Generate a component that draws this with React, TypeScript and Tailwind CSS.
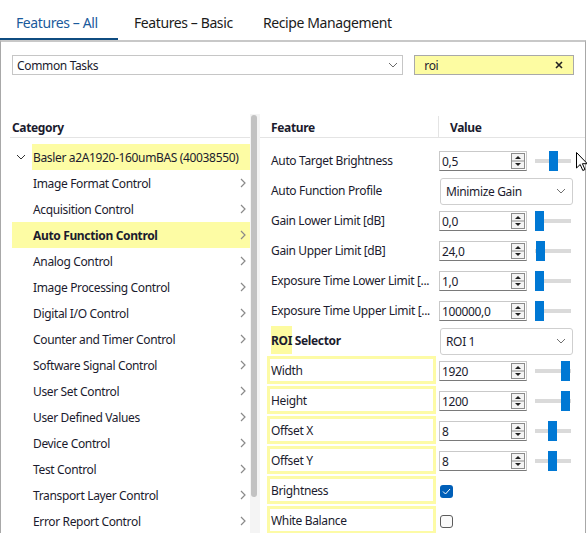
import React from "react";

const categories = [
  "Image Format Control",
  "Acquisition Control",
  "Auto Function Control",
  "Analog Control",
  "Image Processing Control",
  "Digital I/O Control",
  "Counter and Timer Control",
  "Software Signal Control",
  "User Set Control",
  "User Defined Values",
  "Device Control",
  "Test Control",
  "Transport Layer Control",
  "Error Report Control",
];

type Row =
  | { label: string; kind: "spin"; value: string; thumb: number; boxed?: boolean }
  | { label: string; kind: "select"; value: string; roi?: boolean }
  | { label: string; kind: "check"; checked: boolean; boxed?: boolean };

const rows: Row[] = [
  { label: "Auto Target Brightness", kind: "spin", value: "0,5", thumb: 14 },
  { label: "Auto Function Profile", kind: "select", value: "Minimize Gain" },
  { label: "Gain Lower Limit [dB]", kind: "spin", value: "0,0", thumb: 0 },
  { label: "Gain Upper Limit [dB]", kind: "spin", value: "24,0", thumb: 1 },
  { label: "Exposure Time Lower Limit [...", kind: "spin", value: "1,0", thumb: 0 },
  { label: "Exposure Time Upper Limit [...", kind: "spin", value: "100000,0", thumb: 0 },
  { label: "ROI Selector", kind: "select", value: "ROI 1", roi: true },
  { label: "Width", kind: "spin", value: "1920", thumb: 26, boxed: true },
  { label: "Height", kind: "spin", value: "1200", thumb: 26, boxed: true },
  { label: "Offset X", kind: "spin", value: "8", thumb: 13, boxed: true },
  { label: "Offset Y", kind: "spin", value: "8", thumb: 13, boxed: true },
  { label: "Brightness", kind: "check", checked: true, boxed: true },
  { label: "White Balance", kind: "check", checked: false, boxed: true },
];

function ChevronDown({ className = "" }: { className?: string }) {
  return (
    <svg width="10" height="6" viewBox="0 0 10 6" className={className}>
      <path d="M1 1 L5 5 L9 1" fill="none" stroke="currentColor" strokeWidth="1" />
    </svg>
  );
}

function ChevronRight() {
  return (
    <svg width="6" height="10" viewBox="0 0 6 10" className="text-[#8a8a8a]">
      <path d="M1 1 L5 5 L1 9" fill="none" stroke="currentColor" strokeWidth="1.2" />
    </svg>
  );
}

function SpinButtons() {
  return (
    <svg width="14" height="16" viewBox="0 0 14 16" className="shrink-0">
      <rect x="0.5" y="0.5" width="13" height="15" fill="#f4f4f4" stroke="#8c8c8c" />
      <line x1="1" y1="8" x2="13" y2="8" stroke="#8c8c8c" />
      <path d="M4 6 L7 3 L10 6 Z" fill="#222" />
      <path d="M4 10 L7 13 L10 10 Z" fill="#222" />
    </svg>
  );
}

function Slider({ thumb }: { thumb: number }) {
  return (
    <div className="relative ml-[8px] h-[20px] w-[36px]">
      <div className="absolute left-0 right-0 top-[8px] h-[4px] bg-[#dadada]" />
      <div className="absolute top-0 h-[20px] w-[9px] bg-[#0078d4]" style={{ left: thumb }} />
    </div>
  );
}

function SpinBox({ value, thumb }: { value: string; thumb: number }) {
  return (
    <div className="flex items-center">
      <div className="flex h-[20px] w-[88px] items-center justify-between border border-[#c9c9c9] border-b-[#7a7a7a] bg-white pl-[2px] pr-[1px]">
        <span className="pt-[1px] leading-none">{value}</span>
        <SpinButtons />
      </div>
      <Slider thumb={thumb} />
    </div>
  );
}

function Select({ value }: { value: string }) {
  return (
    <div className="ml-[1px] flex h-[27px] w-[133px] items-center justify-between rounded-[3px] border border-[#cfcfcf] bg-white pl-[5px] pr-[6px]">
      <span className="pt-[1px]">{value}</span>
      <ChevronDown className="text-[#707070]" />
    </div>
  );
}

function CheckBox({ checked }: { checked: boolean }) {
  return checked ? (
    <div className="ml-[1px] flex h-[13px] w-[13px] items-center justify-center rounded-[3px] bg-[#005fb8]">
      <svg width="9" height="7" viewBox="0 0 9 7">
        <path d="M1 3.5 L3.5 6 L8 1" fill="none" stroke="#fff" strokeWidth="1" />
      </svg>
    </div>
  ) : (
    <div className="ml-[1px] h-[13px] w-[13px] rounded-[3px] border border-[#5c5c5c] bg-[#fafafa]" />
  );
}

function FeatureRow({ row }: { row: Row }) {
  const boxed = "boxed" in row && row.boxed;
  return (
    <div className="flex h-[30px]">
      <div className="w-[179px] pl-[7px]">
        <div
          className={`flex h-[28px] w-[169px] items-center border-[3px] pl-[1px] ${
            boxed ? "border-[#fdfba6]" : "border-transparent"
          }`}
        >
          {row.kind === "select" && row.roi ? (
            <span className="flex h-[28px] items-center font-bold">
              <span className="flex h-[28px] items-center bg-[#fdfba0] pt-[2px]">ROI</span>
              <span className="pt-[2px]">&nbsp;Selector</span>
            </span>
          ) : (
            <span className="whitespace-nowrap pt-[2px]">{row.label}</span>
          )}
        </div>
      </div>
      <div className="flex flex-1 items-center">
        {row.kind === "spin" && <SpinBox value={row.value} thumb={row.thumb} />}
        {row.kind === "select" && <Select value={row.value} />}
        {row.kind === "check" && <CheckBox checked={row.checked} />}
      </div>
    </div>
  );
}

function Tab({ label, width, active }: { label: string; width: string; active?: boolean }) {
  return (
    <div
      className={`flex h-full items-center whitespace-nowrap border-b-2 pl-[16px] pt-[6px] text-[14px] tracking-[-0.4px] ${width} ${
        active ? "border-[#0f4c81] text-[#1a5a9c]" : "border-transparent text-[#1b1b1b]"
      }`}
    >
      {label}
    </div>
  );
}

export default function App() {
  return (
    <div className="relative h-[533px] w-[587px] overflow-hidden bg-white font-['Noto_Sans',sans-serif] text-[12px] tracking-[-0.35px] text-[#1b1b2e]">
      <div className="flex h-[40px]">
        <Tab label="Features – All" width="w-[118px]" active />
        <Tab label="Features – Basic" width="w-[129px]" />
        <Tab label="Recipe Management" width="w-[150px]" />
      </div>

      <div className="h-[493px] w-[586px] border-x border-t-2 border-x-[#a8a8a8] border-t-[#c8c8c8]">
        {/* filter row */}
        <div className="flex gap-[11px] px-[11px] pt-[13px]">
          <div className="flex h-[20px] w-[392px] items-center justify-between border border-[#c6c6c6] bg-white pl-[4px] pr-[4px]">
            <span className="pt-[1px]">Common Tasks</span>
            <ChevronDown className="text-[#6a6a6a]" />
          </div>
          <div className="flex h-[20px] w-[160px] items-center justify-between border border-[#a9a9a9] bg-[#fdfca2] pl-[9px] pr-[10px]">
            <span className="pt-[1px]">roi</span>
            <svg width="8" height="8" viewBox="0 0 8 8">
              <path d="M1 1 L7 7 M7 1 L1 7" stroke="#222" strokeWidth="1.6" />
            </svg>
          </div>
        </div>

        {/* split view */}
        <div className="mt-[39px] flex h-[419px]">
          {/* category tree */}
          <div className="w-[249px]">
            <div className="ml-[9px] flex h-[24px] items-center border-b border-[#e4e4e4] pl-[2px] pt-[5px] font-bold">
              Category
            </div>
            <div className="mt-[6px]">
              <div className="flex h-[26px] items-center">
                <div className="flex w-[31px] justify-end pr-[6px] text-[#333]">
                  <ChevronDown />
                </div>
                <div className="flex h-[26px] flex-1 items-center whitespace-nowrap bg-[#fdfca4] pl-[1px] pt-[2px]">
                  Basler a2A1920-160umBAS (40038550)
                </div>
              </div>
              {categories.map((c) => {
                const hl = c === "Auto Function Control";
                return (
                  <div
                    key={c}
                    className={`ml-[11px] flex h-[26px] items-center justify-between pl-[21px] pr-[4px] ${
                      hl ? "bg-[#fdfca4] font-bold" : ""
                    }`}
                  >
                    <span className="pt-[2px]">{c}</span>
                    <ChevronRight />
                  </div>
                );
              })}
            </div>
          </div>

          {/* scrollbar */}
          <div className="relative w-[10px] bg-[#f4f4f4]">
            <div className="absolute left-[1px] top-[1px] h-[382px] w-[6px] rounded-[3px] bg-[#c2c2c2]" />
          </div>

          {/* feature grid */}
          <div className="flex-1">
            <div className="flex h-[24px] border-b border-[#e4e4e4] font-bold">
              <div className="flex w-[178px] items-center pl-[11px] pt-[5px]">Feature</div>
              <div className="mt-[2px] flex flex-1 items-center border-l border-[#e4e4e4] pl-[11px] pt-[3px]">
                Value
              </div>
            </div>
            <div className="mt-[8px]">
              {rows.map((r) => (
                <FeatureRow key={r.label} row={r} />
              ))}
            </div>
          </div>
        </div>
      </div>

      {/* mouse pointer */}
      <svg className="absolute left-[576px] top-[152px]" width="12" height="20" viewBox="0 0 12 20">
        <path d="M0.5 0.5 L0.5 16 L4.2 12.5 L6.8 18.5 L9 17.5 L6.4 11.7 L11.3 11.7 Z" fill="#fff" stroke="#000" strokeWidth="1" />
      </svg>
    </div>
  );
}
